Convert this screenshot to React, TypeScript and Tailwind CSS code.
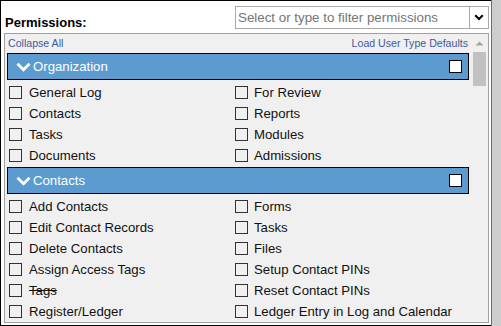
import React from "react";

const orgLeft = ["General Log", "Contacts", "Tasks", "Documents"];
const orgRight = ["For Review", "Reports", "Modules", "Admissions"];
const conLeft = ["Add Contacts", "Edit Contact Records", "Delete Contacts", "Assign Access Tags", "Tags", "Register/Ledger"];
const conRight = ["Forms", "Tasks", "Files", "Setup Contact PINs", "Reset Contact PINs", "Ledger Entry in Log and Calendar"];

function Item({ label, strike, right }: { label: string; strike?: boolean; right?: boolean }) {
  return (
    <div className="h-[21px] flex items-center pl-[4px]">
      <div className="w-[13px] h-[13px] border border-[#333] shrink-0" />
      <span
        className={
          (right ? "ml-[6px]" : "ml-[7px]") +
          " text-[13.2px] leading-[15px] text-[#111] whitespace-nowrap" +
          (strike ? " line-through" : "")
        }
      >
        {label}
      </span>
    </div>
  );
}

function Section({ title, left, right }: { title: string; left: string[]; right: string[] }) {
  const rows: React.ReactNode[] = [];
  for (let i = 0; i < left.length; i++) {
    rows.push(<Item key={"l" + i} label={left[i]} strike={left[i] === "Tags"} />);
    rows.push(<Item key={"r" + i} label={right[i]} right />);
  }
  return (
    <div>
      <div className="mx-[2px] h-[27px] border border-black bg-[#5b9bd0] flex items-center pl-[8px]">
        <svg width="15" height="10" viewBox="0 0 15 10" className="shrink-0">
          <polyline points="1.5,1.8 7.5,7.8 13.5,1.8" fill="none" stroke="#ffffff" strokeWidth="2.8" />
        </svg>
        <span className="ml-[2px] text-[13.2px] leading-[15px] text-white">{title}</span>
        <div className="ml-auto mr-[6px] w-[13px] h-[13px] bg-white border border-black" />
      </div>
      <div className="grid grid-cols-[226px_1fr] pt-[2px]">{rows}</div>
    </div>
  );
}

export default function App() {
  return (
    <div className="flex w-[501px] h-[326px] bg-white font-['Liberation_Sans',Arial,sans-serif]">
      <div className="w-[491px] h-[326px] border-l border-t border-b border-black flex flex-col">
        <div className="h-[32px] flex items-start pl-[4px] pt-[5px]">
          <span className="mt-[9px] text-[13px] leading-[15px] font-bold text-black">Permissions:</span>
          <div className="ml-auto mr-[2px] w-[254px] h-[23px] border border-[#a9a9a9] bg-white flex">
            <div className="flex-1 flex items-center pl-[2px] text-[13.33px] text-[#757575] whitespace-nowrap overflow-hidden">
              Select or type to filter permissions
            </div>
            <div className="w-[19px] border-l border-[#a9a9a9] flex items-center justify-center">
              <svg width="10" height="7" viewBox="0 0 10 7">
                <polyline points="1.2,1.3 5,5 8.8,1.3" fill="none" stroke="#000" strokeWidth="2" />
              </svg>
            </div>
          </div>
        </div>
        <div className="ml-[3px] mr-[2px] h-[290px] border border-[#a0a0a0] bg-[#f0f0f0] flex overflow-hidden">
          <div className="flex-1 overflow-hidden">
            <div className="h-[19px] flex items-center justify-between pl-[3px] pr-[3px] text-[10.6px] text-[#3c5a9c]">
              <span>Collapse All</span>
              <span>Load User Type Defaults</span>
            </div>
            <Section title="Organization" left={orgLeft} right={orgRight} />
            <div className="h-[1px]" />
            <Section title="Contacts" left={conLeft} right={conRight} />
          </div>
          <div className="w-[17px] flex flex-col">
            <div className="h-[18px] flex items-center justify-center">
              <svg width="9" height="5" viewBox="0 0 9 5">
                <polygon points="0.5,4.5 4.5,0.5 8.5,4.5" fill="#a3a3a3" />
              </svg>
            </div>
            <div className="mx-[2px] h-[34px] bg-[#c1c1c1]" />
          </div>
        </div>
      </div>
      <div className="w-px h-[326px] bg-[#6d6d6d]" />
      <div className="flex-1 h-[326px] bg-[#cdcdcd]" />
    </div>
  );
}
